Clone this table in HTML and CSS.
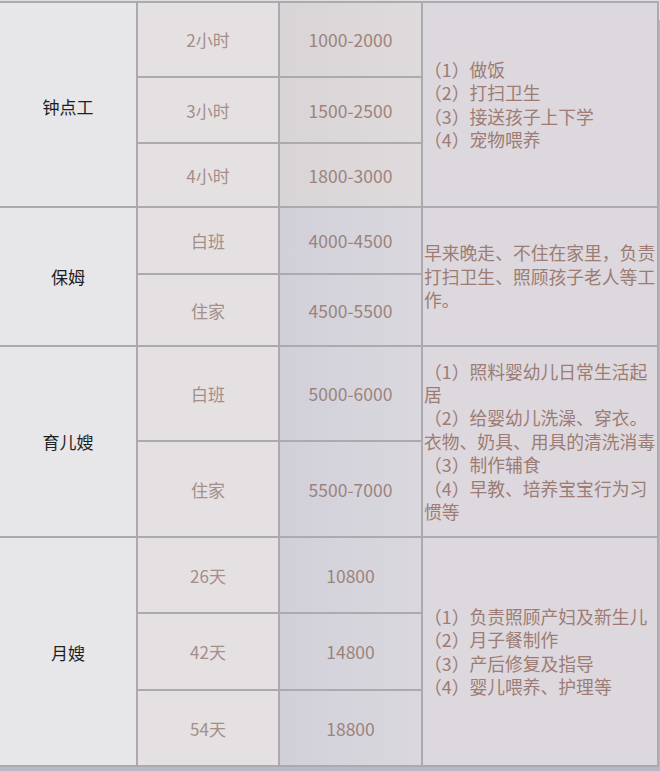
FILE: index.html
```html
<!DOCTYPE html>
<html lang="zh-CN">
<head>
<meta charset="utf-8">
<link rel="stylesheet" href="styles.css">
</head>
<body>
<div class="sheet">
  <div class="c type s1">钟点工</div>
  <div class="c opt r1">2小时</div>
  <div class="c price p1 r1">1000-2000</div>
  <div class="c duty s1">（1）做饭<br>（2）打扫卫生<br>（3）接送孩子上下学<br>（4）宠物喂养</div>
  <div class="c opt r2">3小时</div>
  <div class="c price p1 r2">1500-2500</div>
  <div class="c opt r3">4小时</div>
  <div class="c price p1 r3">1800-3000</div>

  <div class="c type s2">保姆</div>
  <div class="c opt r4">白班</div>
  <div class="c price r4">4000-4500</div>
  <div class="c duty s2">早来晚走、不住在家里，负责打扫卫生、照顾孩子老人等工作。</div>
  <div class="c opt r5">住家</div>
  <div class="c price r5">4500-5500</div>

  <div class="c type s3">育儿嫂</div>
  <div class="c opt r6">白班</div>
  <div class="c price r6">5000-6000</div>
  <div class="c duty s3">（1）照料婴幼儿日常生活起居<br>（2）给婴幼儿洗澡、穿衣。衣物、奶具、用具的清洗消毒<br>（3）制作辅食<br>（4）早教、培养宝宝行为习惯等</div>
  <div class="c opt r7">住家</div>
  <div class="c price r7">5500-7000</div>

  <div class="c type s4">月嫂</div>
  <div class="c opt r8">26天</div>
  <div class="c price r8">10800</div>
  <div class="c duty s4">（1）负责照顾产妇及新生儿<br>（2）月子餐制作<br>（3）产后修复及指导<br>（4）婴儿喂养、护理等</div>
  <div class="c opt r9">42天</div>
  <div class="c price r9">14800</div>
  <div class="c opt r10">54天</div>
  <div class="c price r10">18800</div>
</div>
</body>
</html>
```
FILE: styles.css
```css
html {
  background: linear-gradient(to bottom, #dedde1 0, #dedde1 20px, #b7b9c6 20px);
  height: 100%;
}
body {
  margin: 0;
  font-family: "Noto Sans CJK SC", "Noto Sans", sans-serif;
}
.sheet {
  margin-top: 1px;
  width: 657px;
  padding: 2px 2px 2px 0;
  display: grid;
  grid-template-columns: 136px 140px 141px 234px;
  grid-template-rows: 73px 64px 62px 65px 70px 93px 94px 74px 75px 74px;
  gap: 2px;
  background: #abaaae;
}
.c {
  display: flex;
  align-items: center;
  justify-content: center;
}
.type {
  grid-column: 1;
  background: #e7e6e9;
  color: #1f1f1f;
  font-size: 17px;
}
.opt {
  grid-column: 2;
  background: #e5e1e2;
  color: #a48e89;
  font-size: 17px;
}
.price {
  grid-column: 3;
  background: linear-gradient(to right, #d1d0d9, #dad8de);
  color: #9c837c;
  font-size: 17.5px;
}
.price.p1 {
  background: linear-gradient(to right, #d9d4d6, #dfdadc);
}
.duty {
  grid-column: 4;
  background: #dcd8dd;
  color: #9c7c74;
  font-size: 17.8px;
  line-height: 23.4px;
  justify-content: flex-start;
  text-align: left;
  padding-left: 1px;
}
.s1 { grid-row: 1 / 4; }
.s2 { grid-row: 4 / 6; }
.s3 { grid-row: 6 / 8; }
.s4 { grid-row: 8 / 11; }
.r1 { grid-row: 1; }
.r2 { grid-row: 2; }
.r3 { grid-row: 3; }
.r4 { grid-row: 4; }
.r5 { grid-row: 5; }
.r6 { grid-row: 6; }
.r7 { grid-row: 7; }
.r8 { grid-row: 8; }
.r9 { grid-row: 9; }
.r10 { grid-row: 10; }
.type.s1 { padding-top: 4px; }
.type.s4 { padding-top: 2px; }
```
